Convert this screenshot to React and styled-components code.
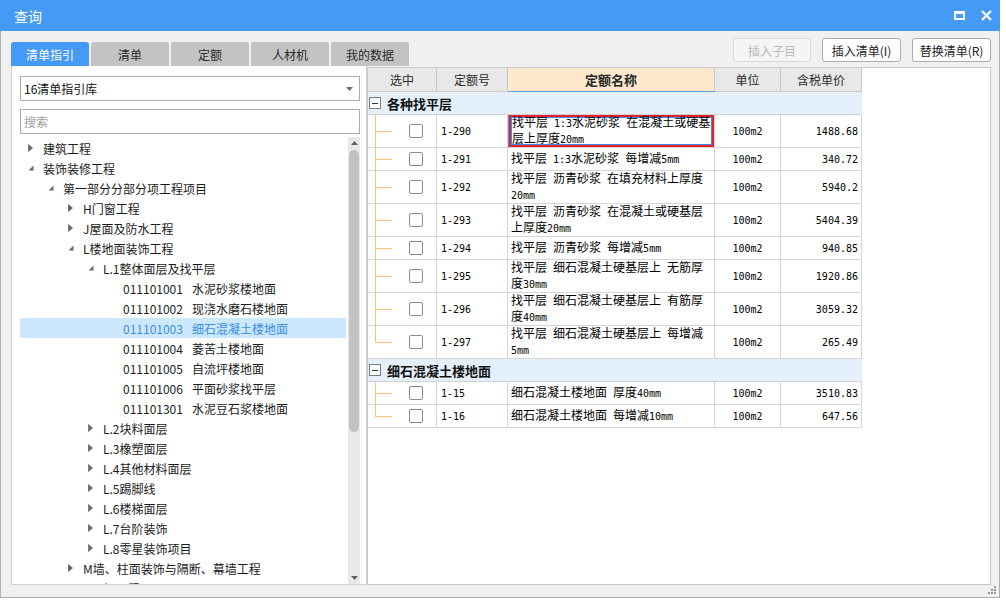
import React from 'react';
import styled, { createGlobalStyle } from 'styled-components';

const Global = createGlobalStyle`
  html, body { margin: 0; padding: 0; background: #ffffff; }
  body { font-family: "Noto Sans CJK SC", "Microsoft YaHei", sans-serif; }
  * { box-sizing: border-box; }
`;

const Dialog = styled.div`
  width: 1000px;
  height: 598px;
  display: flex;
  flex-direction: column;
`;

const TitleBar = styled.div`
  height: 31px;
  background: #4599f7;
  display: flex;
  align-items: center;
  justify-content: space-between;
  padding: 0 8px 0 14px;
`;

const Title = styled.div`
  color: #fff;
  font-size: 14px;
  line-height: 1;
`;

const WinButtons = styled.div`
  display: flex;
  align-items: center;
  gap: 16px;
`;

const Body = styled.div`
  flex: 1;
  background: #f0f0f0;
  border: 1px solid #b0b0b0;
  border-top: none;
  padding: 0 8px 0 10px;
  display: flex;
  flex-direction: column;
`;

const TopRow = styled.div`
  height: 35px;
  display: flex;
  justify-content: space-between;
`;

const Tabs = styled.div`
  align-self: flex-end;
  display: flex;
  gap: 2px;
`;

const Tab = styled.div`
  width: 78px;
  height: 24px;
  border-radius: 3px 3px 0 0;
  background: ${p => (p.$active ? '#4599f7' : '#c3c3c3')};
  color: ${p => (p.$active ? '#ffffff' : '#2a2a2a')};
  font-size: 12px;
  display: flex;
  align-items: center;
  justify-content: center;
`;

const Buttons = styled.div`
  align-self: flex-start;
  margin-top: 7px;
  display: flex;
  gap: 11px;
`;

const Btn = styled.div`
  width: ${p => p.$w || 79}px;
  height: 24px;
  border-radius: 3px;
  border: 1px solid ${p => (p.$disabled ? '#dadada' : '#adadad')};
  background: ${p => (p.$disabled ? '#f5f5f5' : '#fdfdfd')};
  color: ${p => (p.$disabled ? '#b8b8b8' : '#1e1e1e')};
  font-size: 12px;
  display: flex;
  align-items: center;
  justify-content: center;
`;

const Main = styled.div`
  height: 519px;
  display: flex;
`;

const LeftPanel = styled.div`
  width: 356px;
  background: #fff;
  border: 1px solid #d0d0d0;
  border-top: none;
  padding: 10px 6px 0 8px;
  display: flex;
  flex-direction: column;
`;

const Combo = styled.div`
  height: 25px;
  border: 1px solid #ababab;
  display: flex;
  align-items: center;
  justify-content: space-between;
  padding: 0 6px 0 3px;
  font-size: 12px;
  color: #111;
`;

const Search = styled.div`
  height: 25px;
  margin-top: 8px;
  border: 1px solid #ababab;
  display: flex;
  align-items: center;
  padding: 0 3px;
  font-size: 12px;
  color: #a0a0a0;
`;

const TreeBox = styled.div`
  flex: 1;
  min-height: 0;
  margin-top: 3px;
  display: flex;
  overflow: hidden;
`;

const TreeList = styled.div`
  flex: 1;
  padding: 1px 2px 0 0;
  overflow: hidden;
`;

const TreeRow = styled.div`
  height: 20px;
  display: flex;
  align-items: center;
  padding-left: ${p => 8 + p.$lv * 20}px;
  background: ${p => (p.$sel ? '#cce8ff' : 'transparent')};
  color: ${p => (p.$sel ? '#3b8de4' : '#1b1b1b')};
  font-size: 12px;
  white-space: nowrap;
`;

const ArrowSlot = styled.span`
  width: 15px;
  height: 20px;
  display: flex;
  align-items: center;
  flex-shrink: 0;
`;

const Code = styled.span`
  margin-right: 9px;
`;

const ScrollBar = styled.div`
  width: 12px;
  background: #e8e8e8;
  display: flex;
  flex-direction: column;
  align-items: center;
`;

const ScrollArrow = styled.div`
  height: 12px;
  display: flex;
  align-items: center;
  justify-content: center;
`;

const Thumb = styled.div`
  margin-top: 1px;
  width: 10px;
  height: 282px;
  border-radius: 5px;
  background: #c2c2c2;
`;

const ScrollFill = styled.div`
  flex: 1;
`;

const RightPanel = styled.div`
  flex: 1;
  margin-top: 1px;
  background: #fff;
  border: 1px solid #c9c9c9;
`;

const COLS = '69px 71px 207px 66px 81px';

const HeadRow = styled.div`
  display: grid;
  grid-template-columns: ${COLS};
  width: 494px;
  height: 24px;
`;

const HeadCell = styled.div`
  background: ${p => (p.$hl ? '#fde8cb' : '#e8e8e8')};
  border-right: 1px solid #c8c8c8;
  border-bottom: 1px solid ${p => (p.$hl ? '#5a9ff0' : '#c8c8c8')};
  font-size: ${p => (p.$hl ? 13 : 12)}px;
  font-weight: ${p => (p.$hl ? 700 : 400)};
  color: #2a2a2a;
  display: flex;
  align-items: center;
  justify-content: center;
`;

const GroupRow = styled.div`
  width: 494px;
  height: 23px;
  background: #e4f1fc;
  border-bottom: 1px solid #d2d2d2;
  display: flex;
  align-items: center;
  padding-left: 1px;
`;

const Minus = styled.span`
  width: 12px;
  height: 12px;
  border: 1px solid #7d7d7d;
  background: #fff;
  display: flex;
  align-items: center;
  justify-content: center;
  &::after {
    content: '';
    width: 6px;
    height: 1px;
    background: #333;
  }
`;

const GroupText = styled.span`
  margin-left: 6px;
  font-size: 13px;
  font-weight: 700;
  color: #111;
`;

const DataRow = styled.div`
  display: grid;
  grid-template-columns: ${COLS};
  width: 494px;
  height: ${p => p.$h}px;
`;

const Cell = styled.div`
  border-right: 1px solid #d6d6d6;
  border-bottom: 1px solid #d6d6d6;
  font-size: 12px;
  color: #000;
  display: flex;
  align-items: center;
  white-space: pre;
`;

const CheckCell = styled(Cell)`
  position: relative;
  padding-left: 41px;
  &::before {
    content: '';
    position: absolute;
    left: 7px;
    top: 0;
    width: 1px;
    height: ${p => (p.$last ? Math.floor(p.$h / 2) : p.$h)}px;
    background: #f8c674;
  }
  &::after {
    content: '';
    position: absolute;
    left: 7px;
    top: ${p => Math.floor(p.$h / 2)}px;
    width: 17px;
    height: 1px;
    background: #f8c674;
  }
`;

const Check = styled.span`
  width: 14px;
  height: 14px;
  border: 1px solid #8c8c8c;
  border-radius: 2px;
  background: #fff;
`;

const IdCell = styled(Cell)`
  padding-left: 4px;
`;

const NameCell = styled(Cell)`
  flex-direction: column;
  align-items: flex-start;
  justify-content: center;
  padding: 0 3px;
  line-height: 14px;
  box-shadow: ${p => (p.$focus ? 'inset 0 0 0 2px #e3222b, inset 0 0 0 3px #3d8ef0' : 'none')};
  border-left: ${p => (p.$focus ? '1px solid #3d8ef0' : 'none')};
`;

const UnitCell = styled(Cell)`
  justify-content: center;
`;

const PriceCell = styled(Cell)`
  justify-content: flex-end;
  padding-right: 3px;
`;

const Asc = styled.span`
  font-family: "DejaVu Sans Mono", "Liberation Mono", monospace;
  font-size: 10px;
  white-space: pre;
`;

const BottomBar = styled.div`
  flex: 1;
  display: flex;
  justify-content: flex-end;
  align-items: flex-start;
  padding-top: 1px;
  margin-right: -6px;
`;

function Mixed({ text }) {
  return text
    .split(/([\x20-\x7e]+)/)
    .filter(Boolean)
    .map((s, i) => (/^[\x20-\x7e]+$/.test(s) ? <Asc key={i}>{s}</Asc> : <span key={i}>{s}</span>));
}

const Collapsed = () => (
  <svg width="5" height="8" viewBox="0 0 5 8">
    <path d="M0.5 0.5 L4.5 4 L0.5 7.5 Z" fill="#6a6a6a" stroke="#555" strokeWidth="0.6" />
  </svg>
);

const Expanded = () => (
  <svg width="6" height="6" viewBox="0 0 6 6">
    <path d="M5.5 0.5 L5.5 5.5 L0.5 5.5 Z" fill="#6a6a6a" />
  </svg>
);

const tree = [
  { lv: 0, st: 'c', t: '建筑工程' },
  { lv: 0, st: 'e', t: '装饰装修工程' },
  { lv: 1, st: 'e', t: '第一部分分部分项工程项目' },
  { lv: 2, st: 'c', t: 'H门窗工程' },
  { lv: 2, st: 'c', t: 'J屋面及防水工程' },
  { lv: 2, st: 'e', t: 'L楼地面装饰工程' },
  { lv: 3, st: 'e', t: 'L.1整体面层及找平层' },
  { lv: 4, code: '011101001', t: '水泥砂浆楼地面' },
  { lv: 4, code: '011101002', t: '现浇水磨石楼地面' },
  { lv: 4, code: '011101003', t: '细石混凝土楼地面', sel: true },
  { lv: 4, code: '011101004', t: '菱苦土楼地面' },
  { lv: 4, code: '011101005', t: '自流坪楼地面' },
  { lv: 4, code: '011101006', t: '平面砂浆找平层' },
  { lv: 4, code: '011101301', t: '水泥豆石浆楼地面' },
  { lv: 3, st: 'c', t: 'L.2块料面层' },
  { lv: 3, st: 'c', t: 'L.3橡塑面层' },
  { lv: 3, st: 'c', t: 'L.4其他材料面层' },
  { lv: 3, st: 'c', t: 'L.5踢脚线' },
  { lv: 3, st: 'c', t: 'L.6楼梯面层' },
  { lv: 3, st: 'c', t: 'L.7台阶装饰' },
  { lv: 3, st: 'c', t: 'L.8零星装饰项目' },
  { lv: 2, st: 'c', t: 'M墙、柱面装饰与隔断、幕墙工程' },
  { lv: 2, st: 'c', t: 'N天棚工程' },
];

const groups = [
  {
    name: '各种找平层',
    rows: [
      { id: '1-290', name: ['找平层 1:3水泥砂浆 在混凝土或硬基', '层上厚度20mm'], price: '1488.68', focus: true },
      { id: '1-291', name: ['找平层 1:3水泥砂浆 每增减5mm'], price: '340.72' },
      { id: '1-292', name: ['找平层 沥青砂浆 在填充材料上厚度', '20mm'], price: '5940.2' },
      { id: '1-293', name: ['找平层 沥青砂浆 在混凝土或硬基层', '上厚度20mm'], price: '5404.39' },
      { id: '1-294', name: ['找平层 沥青砂浆 每增减5mm'], price: '940.85' },
      { id: '1-295', name: ['找平层 细石混凝土硬基层上 无筋厚', '度30mm'], price: '1920.86' },
      { id: '1-296', name: ['找平层 细石混凝土硬基层上 有筋厚', '度40mm'], price: '3059.32' },
      { id: '1-297', name: ['找平层 细石混凝土硬基层上 每增减', '5mm'], price: '265.49' },
    ],
  },
  {
    name: '细石混凝土楼地面',
    rows: [
      { id: '1-15', name: ['细石混凝土楼地面 厚度40mm'], price: '3510.83' },
      { id: '1-16', name: ['细石混凝土楼地面 每增减10mm'], price: '647.56' },
    ],
  },
];

export default function App() {
  return (
    <>
      <Global />
      <Dialog>
        <TitleBar>
          <Title>查询</Title>
          <WinButtons>
            <svg width="11" height="9" viewBox="0 0 11 9">
              <rect x="1" y="1.5" width="9" height="6.5" fill="none" stroke="#fff" strokeWidth="2" />
              <rect x="0" y="0" width="11" height="3" fill="#fff" />
            </svg>
            <svg width="11" height="11" viewBox="0 0 11 11">
              <path d="M1 1 L10 10 M10 1 L1 10" stroke="#fff" strokeWidth="2.2" />
            </svg>
          </WinButtons>
        </TitleBar>
        <Body>
          <TopRow>
            <Tabs>
              <Tab $active>清单指引</Tab>
              <Tab>清单</Tab>
              <Tab>定额</Tab>
              <Tab>人材机</Tab>
              <Tab>我的数据</Tab>
            </Tabs>
            <Buttons>
              <Btn $disabled $w={78}>插入子目</Btn>
              <Btn>插入清单(I)</Btn>
              <Btn>替换清单(R)</Btn>
            </Buttons>
          </TopRow>
          <Main>
            <LeftPanel>
              <Combo>
                <span>16清单指引库</span>
                <svg width="7" height="4" viewBox="0 0 7 4">
                  <path d="M0 0 L7 0 L3.5 4 Z" fill="#6d6d6d" />
                </svg>
              </Combo>
              <Search>搜索</Search>
              <TreeBox>
                <TreeList>
                  {tree.map((n, i) => (
                    <TreeRow key={i} $lv={n.lv} $sel={n.sel}>
                      <ArrowSlot>{n.st === 'c' ? <Collapsed /> : n.st === 'e' ? <Expanded /> : null}</ArrowSlot>
                      {n.code ? <Code>{n.code}</Code> : null}
                      <span>{n.t}</span>
                    </TreeRow>
                  ))}
                </TreeList>
                <ScrollBar>
                  <ScrollArrow>
                    <svg width="7" height="4" viewBox="0 0 7 4">
                      <path d="M3.5 0 L7 4 L0 4 Z" fill="#606060" />
                    </svg>
                  </ScrollArrow>
                  <Thumb />
                  <ScrollFill />
                  <ScrollArrow>
                    <svg width="7" height="4" viewBox="0 0 7 4">
                      <path d="M0 0 L7 0 L3.5 4 Z" fill="#606060" />
                    </svg>
                  </ScrollArrow>
                </ScrollBar>
              </TreeBox>
            </LeftPanel>
            <RightPanel>
              <HeadRow>
                <HeadCell>选中</HeadCell>
                <HeadCell>定额号</HeadCell>
                <HeadCell $hl>定额名称</HeadCell>
                <HeadCell>单位</HeadCell>
                <HeadCell>含税单价</HeadCell>
              </HeadRow>
              {groups.map(g => (
                <React.Fragment key={g.name}>
                  <GroupRow>
                    <Minus />
                    <GroupText>{g.name}</GroupText>
                  </GroupRow>
                  {g.rows.map((r, i) => {
                    const h = r.name.length > 1 ? 33 : 23;
                    return (
                      <DataRow key={r.id} $h={h}>
                        <CheckCell $last={i === g.rows.length - 1} $h={h}>
                          <Check />
                        </CheckCell>
                        <IdCell>
                          <Asc>{r.id}</Asc>
                        </IdCell>
                        <NameCell $focus={r.focus}>
                          {r.name.map((l, k) => (
                            <div key={k}>
                              <Mixed text={l} />
                            </div>
                          ))}
                        </NameCell>
                        <UnitCell>
                          <Asc>100m2</Asc>
                        </UnitCell>
                        <PriceCell>
                          <Asc>{r.price}</Asc>
                        </PriceCell>
                      </DataRow>
                    );
                  })}
                </React.Fragment>
              ))}
            </RightPanel>
          </Main>
          <BottomBar>
            <svg width="9" height="9" viewBox="0 0 9 9">
              <rect x="6" y="0" width="2" height="2" fill="#9a9a9a" />
              <rect x="3" y="3" width="2" height="2" fill="#9a9a9a" />
              <rect x="6" y="3" width="2" height="2" fill="#9a9a9a" />
              <rect x="0" y="6" width="2" height="2" fill="#9a9a9a" />
              <rect x="3" y="6" width="2" height="2" fill="#9a9a9a" />
              <rect x="6" y="6" width="2" height="2" fill="#9a9a9a" />
            </svg>
          </BottomBar>
        </Body>
      </Dialog>
    </>
  );
}
